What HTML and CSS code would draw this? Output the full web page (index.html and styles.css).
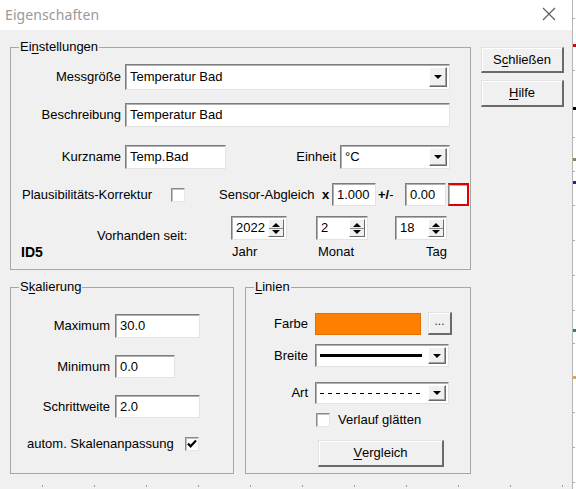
FILE: index.html
```html
<!DOCTYPE html>
<html>
<head>
<meta charset="utf-8">
<title>Eigenschaften</title>
<link rel="stylesheet" href="styles.css">
</head>
<body>
<div class="screen">
  <div class="dialog">
    <div class="titlebar">
      <span class="title">Eigenschaften</span>
      <svg class="close" width="14" height="14" viewBox="0 0 14 14"><path d="M1 1L13 13M13 1L1 13" stroke="#5a5a5a" stroke-width="1.1" fill="none"/></svg>
    </div>
    <div class="content">
      <div class="main">
        <fieldset class="group settings">
          <legend>Ei<u>n</u>stellungen</legend>
          <div class="row r1">
            <span class="lbl w110">Messgröße</span>
            <div class="field combo w325"><span class="val">Temperatur Bad</span><span class="drop"><i class="tri-down"></i></span></div>
          </div>
          <div class="row r2">
            <span class="lbl w110">Beschreibung</span>
            <div class="field w325"><span class="val">Temperatur Bad</span></div>
          </div>
          <div class="row r3">
            <span class="lbl w110">Kurzname</span>
            <div class="field w101"><span class="val">Temp.Bad</span></div>
            <span class="lbl w110">Einheit</span>
            <div class="field combo w110"><span class="val">°C</span><span class="drop"><i class="tri-down"></i></span></div>
          </div>
          <div class="row r4">
            <span class="txt plaus">Plausibilitäts-Korrektur</span>
            <span class="check"></span>
            <span class="txt sensor">Sensor-Abgleich</span>
            <b class="txt times">x</b>
            <div class="field w44"><span class="val">1.000</span></div>
            <b class="txt pm">+/<span class="thin">-</span></b>
            <div class="field w41"><span class="val">0.00</span></div>
            <span class="redbox"></span>
          </div>
          <div class="row r5">
            <span class="txt since">Vorhanden seit:</span>
            <div class="field spin w56"><span class="val">2022</span><span class="spinbtn"><i class="tri-up"></i><i class="tri-down"></i></span></div>
            <div class="field spin w52 ml29"><span class="val">2</span><span class="spinbtn"><i class="tri-up"></i><i class="tri-down"></i></span></div>
            <div class="field spin w52 ml27"><span class="val">18</span><span class="spinbtn"><i class="tri-up"></i><i class="tri-down"></i></span></div>
          </div>
          <div class="row r6">
            <b class="txt idtag">ID5</b>
            <span class="txt year">Jahr</span>
            <span class="txt month">Monat</span>
            <span class="txt day">Tag</span>
          </div>
        </fieldset>

        <div class="lower">
          <fieldset class="group scale">
            <legend>S<u>k</u>alierung</legend>
            <div class="row s1">
              <span class="lbl w99">Maximum</span>
              <div class="field w85 h24"><span class="val">30.0</span></div>
            </div>
            <div class="row s2">
              <span class="lbl w99">Minimum</span>
              <div class="field w60 h23"><span class="val">0.0</span></div>
            </div>
            <div class="row s3">
              <span class="lbl w99">Schrittweite</span>
              <div class="field w85 h23"><span class="val">2.0</span></div>
            </div>
            <div class="row s4">
              <span class="txt autom">autom. Skalenanpassung</span>
              <span class="check checked"><svg width="12" height="12" viewBox="0 0 12 12"><path d="M2 5.5L4.6 8.3L10 2.6" stroke="#000" stroke-width="2.2" fill="none"/></svg></span>
            </div>
          </fieldset>

          <fieldset class="group lines">
            <legend><u>L</u>inien</legend>
            <div class="row l1">
              <span class="lbl w62">Farbe</span>
              <span class="swatch"></span>
              <button class="btn dots">...</button>
            </div>
            <div class="row l2">
              <span class="lbl w62">Breite</span>
              <div class="field combo w134 h23"><span class="linepre solid"></span><span class="drop"><i class="tri-down"></i></span></div>
            </div>
            <div class="row l3">
              <span class="lbl w62">Art</span>
              <div class="field combo w134 h22"><span class="linepre dashed"></span><span class="drop"><i class="tri-down"></i></span></div>
            </div>
            <div class="row l4">
              <span class="check"></span>
              <span class="txt smooth">Verlauf glätten</span>
            </div>
            <div class="row l5">
              <button class="btn compare"><u>V</u>ergleich</button>
            </div>
          </fieldset>
        </div>
      </div>

      <div class="side">
        <button class="btn side-btn b1">S<u>c</u>hließen</button>
        <button class="btn side-btn b2"><u>H</u>ilfe</button>
      </div>
    </div>
    <div class="bottom-ticks">
      <i></i><i></i><i></i><i></i><i></i><i></i><i></i><i></i><i></i><i></i><i></i>
    </div>
  </div>
  <div class="edge">
    <i class="tk" style="top:18px"></i>
    <i class="mk red" style="top:44px"></i>
    <i class="tk" style="top:70px"></i>
    <i class="mk black" style="top:107px"></i>
    <i class="tk" style="top:137px"></i>
    <i class="mk olive" style="top:158px"></i>
    <i class="tk" style="top:171px"></i>
    <i class="mk blue" style="top:181px"></i>
    <i class="tk" style="top:205px"></i>
    <i class="tk" style="top:240px"></i>
    <i class="tk" style="top:275px"></i>
    <i class="tk" style="top:310px"></i>
    <i class="mk green" style="top:329px"></i>
    <i class="tk" style="top:343px"></i>
    <i class="mk orange" style="top:376px"></i>
    <i class="tk" style="top:412px"></i>
    <i class="tk" style="top:447px"></i>
    <i class="tk" style="top:482px"></i>
  </div>
</div>
</body>
</html>
```

FILE: styles.css
```css
* { box-sizing: border-box; }
html, body { margin: 0; padding: 0; }
body {
  width: 576px;
  height: 489px;
  overflow: hidden;
  background: #ffffff;
  font-family: "Liberation Sans", Arial, sans-serif;
  font-size: 13px;
  color: #000;
}
u { text-decoration: underline; text-underline-offset: 2px; }

.screen { display: flex; width: 576px; height: 489px; }
.dialog {
  width: 573px;
  height: 489px;
  border-right: 1px solid #b4b4b4;
  background: #f0f0f0;
  display: flex;
  flex-direction: column;
}

/* title bar */
.titlebar {
  height: 30px;
  flex: 0 0 30px;
  background: #ffffff;
  display: flex;
  align-items: center;
  padding: 0 16px 2px 5px;
}
.title {
  flex: 1;
  font-family: "Noto Sans", "Open Sans", sans-serif;
  font-size: 14px;
  color: #999999;
  letter-spacing: 0.1px;
}
.close { display: block; }

/* content */
.content { display: flex; padding: 9px 0 0 10px; }
.main { width: 461px; display: flex; flex-direction: column; }
.side { width: 83px; margin-left: 10px; margin-top: 8px; display: flex; flex-direction: column; gap: 7px; }

.group {
  margin: 0;
  padding: 0;
  border: 1px solid #a6a6a6;
  min-width: 0;
}
.group legend {
  margin-left: 8px;
  padding: 0 1px;
  height: 16px;
  line-height: 16px;
}

.row { display: flex; align-items: center; }
.lbl { text-align: right; white-space: nowrap; margin-right: 4px; line-height: 16px; }
.txt { white-space: nowrap; line-height: 16px; }

.w110 { width: 110px; }
.w99 { width: 99px; margin-right: 5px; }
.w62 { width: 62px; margin-right: 7px; }

/* sunken field */
.field {
  height: 24px;
  background: #ffffff;
  border: 1px solid;
  border-color: #7c7c7c #e3e3e3 #e3e3e3 #7c7c7c;
  box-shadow: inset 1px 1px 0 #b0b0b0;
  display: flex;
  align-items: center;
  position: relative;
}
.field .val { padding-left: 4px; line-height: 16px; white-space: nowrap; flex: 1; }
.w325 { width: 325px; }
.w101 { width: 101px; }
.w44 { width: 44px; }
.w41 { width: 41px; }
.w56 { width: 56px; }
.w52 { width: 52px; }
.w85 { width: 85px; }
.w60 { width: 60px; }
.w134 { width: 134px; }
.h24 { height: 24px; }
.h23 { height: 23px; }
.h22 { height: 22px; }
.ml29 { margin-left: 29px; }
.ml27 { margin-left: 27px; }

/* combo dropdown button */
.drop {
  width: 18px;
  height: calc(100% - 4px);
  margin-right: 2px;
  background: #f0f0f0;
  border: 1px solid;
  border-color: #ffffff #6a6a6a #6a6a6a #ffffff;
  box-shadow: inset -1px -1px 0 #a0a0a0;
  display: flex;
  align-items: center;
  justify-content: center;
  flex: 0 0 18px;
}
.tri-down {
  display: block;
  width: 0; height: 0;
  border-left: 4px solid transparent;
  border-right: 4px solid transparent;
  border-top: 4px solid #000;
}
.tri-up {
  display: block;
  width: 0; height: 0;
  border-left: 4px solid transparent;
  border-right: 4px solid transparent;
  border-bottom: 4px solid #000;
}

/* spinner */
.spinbtn {
  width: 16px;
  height: calc(100% - 4px);
  margin-right: 2px;
  flex: 0 0 16px;
  background: #f0f0f0;
  border: 1px solid;
  border-color: #ffffff #6a6a6a #6a6a6a #ffffff;
  display: flex;
  flex-direction: column;
  align-items: center;
  justify-content: center;
  gap: 3px;
  position: relative;
}
.spinbtn::after {
  content: "";
  position: absolute;
  left: 0; right: 0; top: 50%;
  height: 1px;
  background: #8a8a8a;
}

/* checkbox */
.check {
  width: 14px;
  height: 14px;
  flex: 0 0 14px;
  background: #ffffff;
  border: 1px solid;
  border-color: #8a8a8a #e6e6e6 #e6e6e6 #8a8a8a;
  box-shadow: inset 1px 1px 0 #c0c0c0;
  display: flex;
  align-items: center;
  justify-content: center;
}
.check svg { display: block; }

.redbox {
  width: 21px;
  height: 23px;
  margin-left: 2px;
  background: #ffffff;
  border: 2px solid #e10000;
  border-left: 1px solid #8a8a8a;
  box-shadow: inset 1px 1px 0 #b8b8b8;
}

/* Einstellungen rows */
.settings { height: 231px; }
.r1 { margin-top: 9px; height: 26px; }
.r1 .field { height: 26px; }
.r2 { margin-top: 13px; height: 24px; }
.r3 { margin-top: 18px; height: 24px; }
.r4 { margin-top: 14px; height: 23px; }
.r4 .field { height: 23px; }
.plaus { width: 149px; margin-left: 11px; }
.sensor { width: 102px; margin-left: 34px; }
.times { width: 10px; margin-left: 1px; font-weight: bold; }
.pm { width: 27px; margin-left: 2px; font-weight: bold; }
.pm .thin { font-weight: normal; }
.r5 { margin-top: 10px; height: 24px; align-items: flex-start; }
.since { width: 134px; margin-left: 86px; align-self: flex-end; margin-bottom: -4px; }
.r6 { margin-top: 4px; height: 16px; }
.idtag { width: 211px; margin-left: 10px; font-weight: bold; font-size: 14px; }
.year { width: 86px; }
.month { width: 82px; }
.day { width: 47px; text-align: right; }

/* lower groups */
.lower { display: flex; gap: 11px; margin-top: 9px; }
.scale { width: 224px; height: 195px; }
.lines { width: 226px; height: 195px; }

.s1 { margin-top: 19px; }
.s2 { margin-top: 17px; }
.s3 { margin-top: 17px; }
.s4 { margin-top: 18px; height: 16px; }
.autom { width: 158px; margin-left: 16px; }

.l1 { margin-top: 17px; height: 23px; }
.swatch {
  width: 106px;
  height: 22px;
  background: #ff8000;
  border: 1px solid #e07000;
  margin-right: 7px;
}
.l2 { margin-top: 9px; height: 23px; }
.l3 { margin-top: 15px; height: 22px; }
.l4 { margin-top: 9px; height: 14px; padding-left: 70px; }
.smooth { margin-left: 8px; }
.l5 { margin-top: 13px; }

.linepre { flex: 1; margin: 0 6px 0 4px; }
.linepre.solid { height: 3px; background: #000; }
.linepre.dashed {
  height: 1px;
  background: repeating-linear-gradient(90deg, #000 0 4px, transparent 4px 8px);
}

/* raised buttons */
.btn {
  font-family: "Liberation Sans", Arial, sans-serif;
  font-size: 13px;
  color: #000;
  background: #f0f0f0;
  border-style: solid;
  border-width: 1px 2px 2px 1px;
  border-color: #e2e2e2 #6a6a6a #6a6a6a #e2e2e2;
  box-shadow: inset 1px 1px 0 #ffffff;
  padding: 0;
  margin: 0;
  line-height: 16px;
  display: flex;
  align-items: center;
  justify-content: center;
}
.dots { width: 24px; height: 23px; font-size: 12px; padding-bottom: 4px; color: #333; }
.compare { width: 126px; height: 27px; margin-left: 72px; }
.side-btn { width: 83px; }
.b1 { height: 26px; }
.b2 { height: 27px; }

/* chart remnants */
.bottom-ticks {
  margin-top: auto;
  height: 4px;
  display: flex;
  gap: 51px;
  padding-left: 42px;
  align-items: flex-start;
}
.bottom-ticks i { display: block; width: 1px; height: 2px; background: #9a9a9a; }

.edge { width: 3px; height: 489px; position: relative; background: #ffffff; }
.edge i { position: absolute; left: 0; display: block; }
.edge .tk { width: 2px; height: 1px; background: #aaaaaa; }
.edge .mk { width: 3px; height: 3px; }
.edge .red { background: #e00000; }
.edge .black { background: #000; }
.edge .olive { background: #8a8a40; }
.edge .blue { background: #1a1ad0; }
.edge .green { background: #1a8a6a; }
.edge .orange { background: #e8a050; }
```
